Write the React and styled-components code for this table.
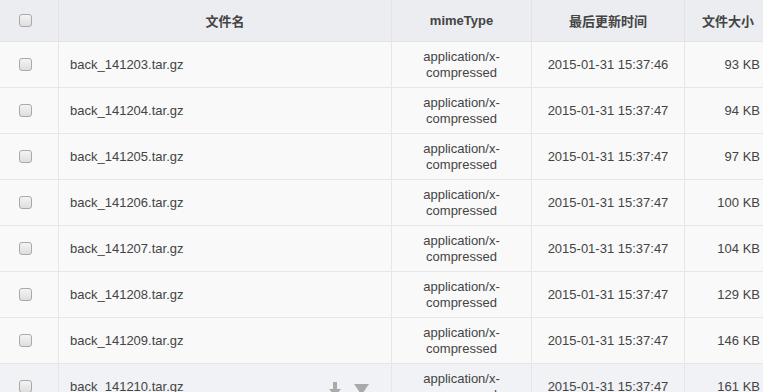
import React from 'react'
import styled, { createGlobalStyle } from 'styled-components'

const files = [
  { name: 'back_141203.tar.gz', time: '2015-01-31 15:37:46', size: '93 KB' },
  { name: 'back_141204.tar.gz', time: '2015-01-31 15:37:47', size: '94 KB' },
  { name: 'back_141205.tar.gz', time: '2015-01-31 15:37:47', size: '97 KB' },
  { name: 'back_141206.tar.gz', time: '2015-01-31 15:37:47', size: '100 KB' },
  { name: 'back_141207.tar.gz', time: '2015-01-31 15:37:47', size: '104 KB' },
  { name: 'back_141208.tar.gz', time: '2015-01-31 15:37:47', size: '129 KB' },
  { name: 'back_141209.tar.gz', time: '2015-01-31 15:37:47', size: '146 KB' },
  { name: 'back_141210.tar.gz', time: '2015-01-31 15:37:47', size: '161 KB', hover: true },
]

const App = () => {
  return (
    <>
      <Global />
      <Table>
        <HeadCell $check><Check /></HeadCell>
        <HeadCell>文件名</HeadCell>
        <HeadCell>mimeType</HeadCell>
        <HeadCell>最后更新时间</HeadCell>
        <HeadCell>文件大小</HeadCell>
        {files.map((f) => (
          <React.Fragment key={f.name}>
            <Cell $hover={f.hover} $align="check"><Check /></Cell>
            <Cell $hover={f.hover} $align="left">
              {f.name}
              {f.hover && (
                <Actions>
                  <svg width="14" height="14" viewBox="0 0 14 14">
                    <path d="M5 0h4v7h4L7 14 1 7h4z" fill="#aaa" />
                  </svg>
                  <svg width="15" height="11" viewBox="0 0 15 11">
                    <path d="M0 0h15L7.5 11z" fill="#aaa" />
                  </svg>
                </Actions>
              )}
            </Cell>
            <Cell $hover={f.hover} $align="center">application/x-<br />compressed</Cell>
            <Cell $hover={f.hover} $align="center">{f.time}</Cell>
            <Cell $hover={f.hover} $align="right">{f.size}</Cell>
          </React.Fragment>
        ))}
      </Table>
    </>
  )
}

export default App

const Global = createGlobalStyle`
  body {
    margin: 0;
    background: #f9f9f9;
    overflow: hidden;
    font-family: "Liberation Sans", "Noto Sans CJK SC", sans-serif;
  }
`

const Table = styled.div`
  display: grid;
  grid-template-columns: 59px 333px 140px 153px 87px;
  width: 772px;
`

const justify = {
  check: 'flex-start',
  left: 'flex-start',
  center: 'center',
  right: 'flex-end',
}

const pad = {
  check: '0 0 0 19px',
  left: '0 22px 0 11px',
  center: '0',
  right: '0 12px 0 0',
}

const HeadCell = styled.div`
  height: 42px;
  box-sizing: border-box;
  background: #ebedf0;
  border-right: 1px solid #e3e3e3;
  border-bottom: 1px solid #e3e3e3;
  display: flex;
  align-items: center;
  justify-content: ${(p) => (p.$check ? 'flex-start' : 'center')};
  padding-left: ${(p) => (p.$check ? '19px' : '0')};
  font-size: 13px;
  font-weight: bold;
  color: #444;
  &:last-of-type { border-right: none; }
`

const Cell = styled.div`
  height: 46px;
  box-sizing: border-box;
  background: ${(p) => (p.$hover ? '#f0f2f5' : '#f9f9f9')};
  border-right: 1px solid #e6e6e6;
  border-bottom: 1px solid #e6e6e6;
  display: flex;
  align-items: center;
  justify-content: ${(p) => justify[p.$align]};
  text-align: ${(p) => (p.$align === 'check' ? 'left' : p.$align)};
  padding: ${(p) => pad[p.$align]};
  font-size: 13px;
  line-height: 16px;
  color: #444;
  &:nth-child(5n) { border-right: none; }
`

const Actions = styled.span`
  margin-left: auto;
  display: flex;
  align-items: center;
  gap: 12px;
  padding-top: 5px;
`

const Check = styled.span`
  display: block;
  width: 11px;
  height: 11px;
  border: 1px solid #a9a9a9;
  border-radius: 3px;
  background: linear-gradient(#f4f4f4, #dedede);
`
